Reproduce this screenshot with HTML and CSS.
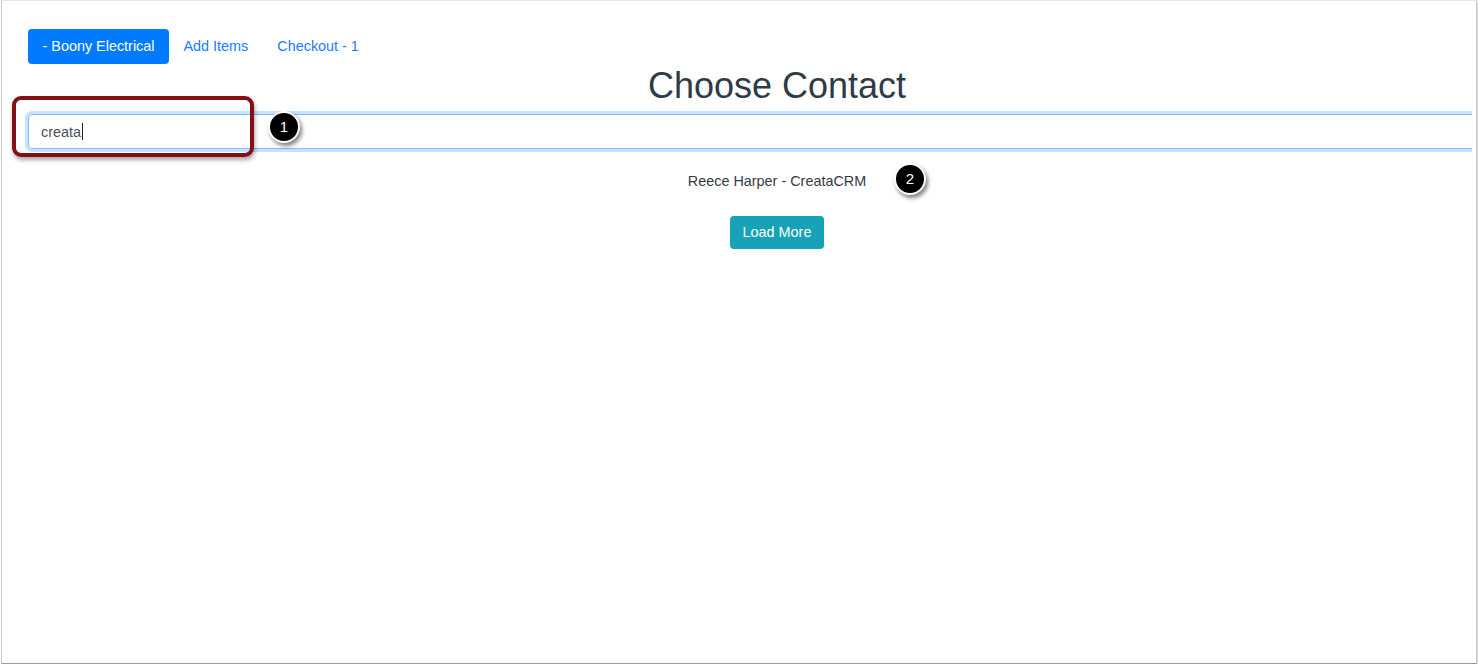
FILE: index.html
```html
<!DOCTYPE html>
<html lang="en">
<head>
    <meta charset="UTF-8">
    <meta name="viewport" content="width=device-width, initial-scale=1.0">
    <title>Choose Contact</title>
    <link rel="stylesheet" href="styles.css">
</head>
<body>
    <div class="window">
        <div class="viewport">
            <div class="page">
                <nav class="nav">
                    <a class="nav-link active" href="#">- Boony Electrical</a>
                    <a class="nav-link" href="#">Add Items</a>
                    <a class="nav-link" href="#">Checkout - 1</a>
                </nav>
                <h1>Choose Contact</h1>
                <div class="search-box" role="textbox">creata<span class="caret"></span></div>
                <div class="results">
                    <div class="contact">Reece Harper - CreataCRM</div>
                    <button class="btn-load">Load More</button>
                </div>
            </div>
        </div>

        <!-- annotations -->
        <div class="highlight"></div>
        <div class="callout callout-1">1</div>
        <div class="callout callout-2">2</div>
    </div>
</body>
</html>
```

FILE: styles.css
```css
body {
    margin: 0 0 0 1px;
    font-family: "Liberation Sans", Arial, sans-serif;
    background-color: #fff;
}
.window {
    position: relative;
    width: 1474px;
    height: 662px;
    border: 1px solid #c9c9c9;
    border-top-color: #e4e4e4;
    border-bottom-color: #9a9a9a;
    box-shadow: 1px 2px 3px rgba(0, 0, 0, 0.25);
    overflow: hidden;
}
.viewport {
    width: 1470px;
    height: 100%;
    overflow: hidden;
}
.page {
    width: 1498px;
    padding: 28px 0 0 26px;
}
.nav {
    display: flex;
}
.nav-link {
    display: block;
    padding: 7px 14.5px;
    font-size: 14.4px;
    line-height: 21px;
    color: #1a7bff;
    text-decoration: none;
    border-radius: 4px;
}
.nav-link.active {
    background-color: #007bff;
    color: #fff;
}
h1 {
    margin: 0;
    text-align: center;
    font-size: 36px;
    font-weight: 400;
    line-height: 43px;
    color: #2f3b47;
}
.search-box {
    margin-top: 7px;
    height: 33px;
    padding: 0 12px;
    border: 1px solid #80bdff;
    border-radius: 4px;
    box-shadow: 0 0 0 3px rgba(0, 123, 255, 0.22);
    font-size: 14.4px;
    color: #495057;
    display: flex;
    align-items: center;
}
.caret {
    display: inline-block;
    width: 1px;
    height: 17px;
    background-color: #222;
    margin-left: 1px;
}
.results {
    display: flex;
    flex-direction: column;
    align-items: center;
    padding-top: 22px;
}
.contact {
    font-size: 14.4px;
    line-height: 21px;
    color: #333b44;
}
.btn-load {
    margin-top: 24px;
    padding: 6px 13px;
    font-family: inherit;
    font-size: 14.4px;
    line-height: 21px;
    color: #fff;
    background-color: #17a2b8;
    border: none;
    border-radius: 4px;
}
.highlight {
    position: absolute;
    left: 10px;
    top: 95px;
    width: 234px;
    height: 53px;
    border: 4px solid #841015;
    border-radius: 9px;
    box-shadow: 1px 3px 4px rgba(0, 0, 0, 0.35);
}
.callout {
    position: absolute;
    width: 28px;
    height: 28px;
    border: 2px solid #fff;
    border-radius: 50%;
    background-color: #000;
    color: #fff;
    font-size: 15px;
    line-height: 28px;
    text-align: center;
    box-shadow: 2px 3px 4px rgba(0, 0, 0, 0.5);
}
.callout-1 {
    left: 266px;
    top: 110px;
}
.callout-2 {
    left: 892px;
    top: 162px;
}
```
